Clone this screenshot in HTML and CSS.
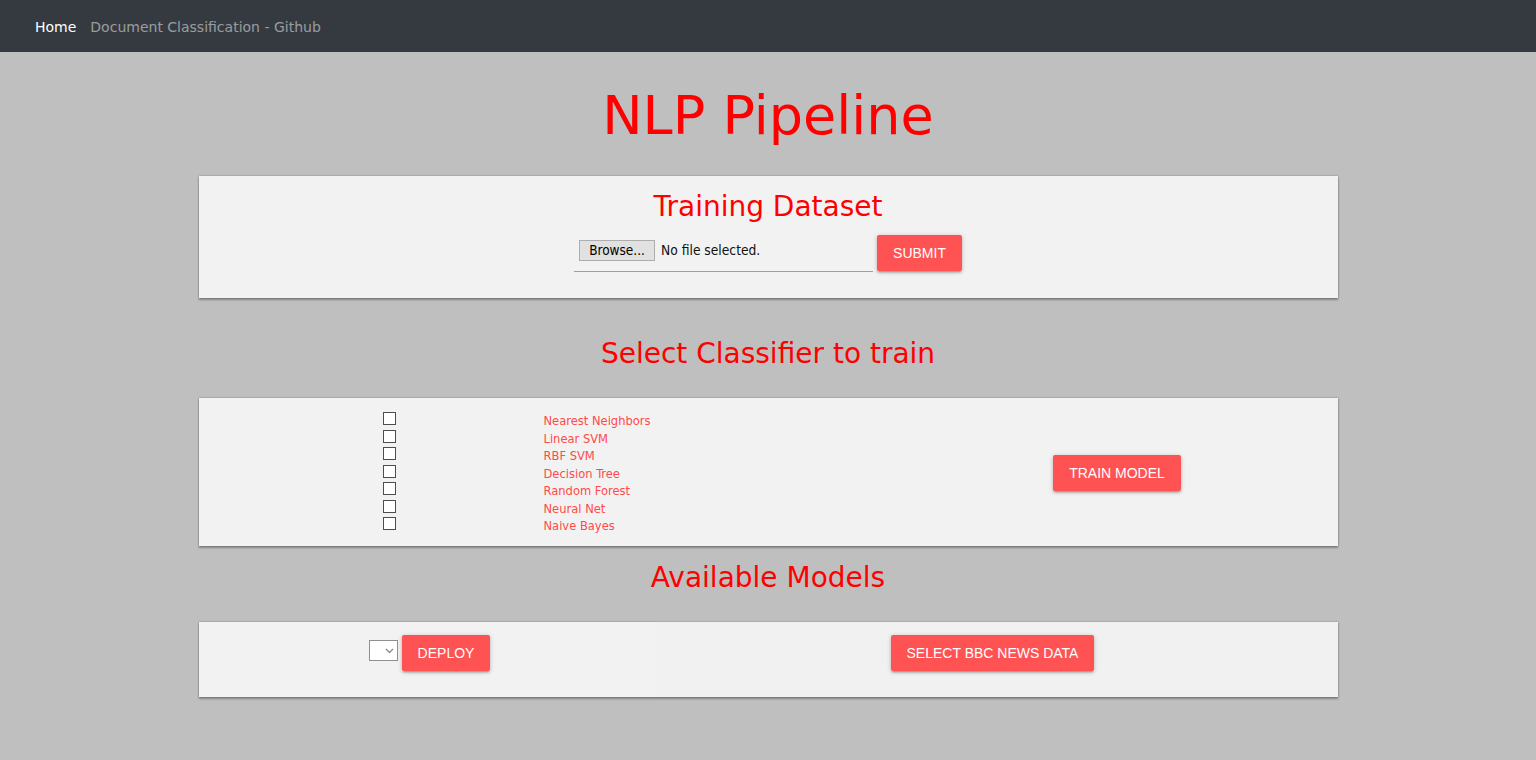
FILE: index.html
```html
<!DOCTYPE html>
<html lang="en">
<head>
<meta charset="utf-8">
<title>NLP Pipeline</title>
<link rel="stylesheet" href="styles.css">
</head>
<body>
<nav class="navbar">
  <a class="nav-link active" href="#">Home</a>
  <a class="nav-link" href="#">Document Classification - Github</a>
</nav>
<main class="main">
  <h1 class="title">NLP Pipeline</h1>

  <section class="card card-upload">
    <h2 class="heading">Training Dataset</h2>
    <div class="file-row">
      <div class="file-field">
        <span class="browse">Browse...</span>
        <span class="file-name">No file selected.</span>
      </div>
      <button class="btn">SUBMIT</button>
    </div>
  </section>

  <h2 class="heading section-heading">Select Classifier to train</h2>

  <section class="card card-classifiers">
    <div class="checks">
      <span class="check"></span>
      <span class="check"></span>
      <span class="check"></span>
      <span class="check"></span>
      <span class="check"></span>
      <span class="check"></span>
      <span class="check"></span>
    </div>
    <ul class="labels">
      <li>Nearest Neighbors</li>
      <li>Linear SVM</li>
      <li>RBF SVM</li>
      <li>Decision Tree</li>
      <li>Random Forest</li>
      <li>Neural Net</li>
      <li>Naive Bayes</li>
    </ul>
    <div class="train-col">
      <button class="btn">TRAIN MODEL</button>
    </div>
  </section>

  <h2 class="heading section-heading models-heading">Available Models</h2>

  <section class="card card-models">
    <div class="deploy-col">
      <span class="select"><svg width="9" height="6" viewBox="0 0 9 6"><path d="M1 1l3.5 3.5L8 1" fill="none" stroke="#8a8a8a" stroke-width="1.3"/></svg></span>
      <button class="btn">DEPLOY</button>
    </div>
    <div class="data-col">
      <button class="btn">SELECT BBC NEWS DATA</button>
    </div>
  </section>
</main>
</body>
</html>
```
FILE: styles.css
```css
* { box-sizing: border-box; }

body {
  margin: 0;
  background: #bfbfbf;
  font-family: "DejaVu Sans Condensed", "Noto Sans", "DejaVu Sans", sans-serif;
}

.navbar {
  height: 52px;
  background: #343a40;
  display: flex;
  align-items: center;
  padding: 2px 0 0 35px;
  gap: 14px;
}

.nav-link {
  font-family: "DejaVu Sans", sans-serif;
  font-size: 14px;
  color: rgba(255, 255, 255, 0.5);
  text-decoration: none;
}

.nav-link.active { color: #fff; }

.main { padding-bottom: 60px; }

.title {
  margin: 32px 0 28px;
  text-align: center;
  font-family: "DejaVu Sans", sans-serif;
  font-size: 54px;
  line-height: 64px;
  font-weight: normal;
  color: #ff0000;
}

.heading {
  margin: 0;
  text-align: center;
  font-family: "DejaVu Sans", sans-serif;
  font-size: 28px;
  line-height: 36px;
  font-weight: normal;
  color: #ff0000;
}

.section-heading { margin: 38px 0 26px; }
.models-heading { margin: 14px 0 26px; }

.card {
  width: 1139px;
  margin: 0 auto;
  background: #f2f2f2;
  box-shadow: 0 2px 2px rgba(0, 0, 0, 0.3), 0 0 2px rgba(0, 0, 0, 0.3);
}

.card-upload {
  height: 122px;
  padding-top: 13px;
}

.file-row {
  display: flex;
  justify-content: center;
  gap: 4px;
  margin-top: 10px;
}

.file-field {
  width: 299px;
  height: 37px;
  border-bottom: 1px solid #9e9e9e;
  display: flex;
  align-items: flex-start;
  padding: 5px 0 0 5px;
  gap: 6px;
}

.browse {
  width: 76px;
  height: 21px;
  background: #e1e1e1;
  border: 1px solid #adadad;
  font-size: 13.5px;
  line-height: 19px;
  text-align: center;
  color: #000;
}

.file-name {
  font-size: 13.7px;
  line-height: 21px;
  color: #111;
}

.btn {
  height: 36px;
  padding: 0 16px;
  border: none;
  border-radius: 2px;
  background: #ff5252;
  color: #fff;
  font-family: "Liberation Sans", Arial, sans-serif;
  font-size: 14px;
  line-height: 36px;
  box-shadow: 0 2px 2px 0 rgba(0, 0, 0, 0.14), 0 3px 1px -2px rgba(0, 0, 0, 0.12), 0 1px 5px 0 rgba(0, 0, 0, 0.2);
  cursor: pointer;
}

.card-classifiers {
  height: 148px;
  display: grid;
  grid-template-columns: 345px 353px 1fr;
  padding: 13px 0 12px;
}

.checks {
  display: flex;
  flex-direction: column;
  padding-left: 184px;
}

.check {
  width: 13px;
  height: 13px;
  margin: 1px 0 3.5px;
  background: #fff;
  border: 1px solid #4d4d4d;
}

.labels {
  list-style: none;
  margin: 0;
  padding: 1px 0 0;
  font-size: 12.8px;
  line-height: 17.5px;
  color: #ff4a4a;
}

.train-col {
  display: flex;
  align-items: center;
  justify-content: center;
}

.card-models {
  height: 75px;
  display: grid;
  grid-template-columns: 456px 1fr;
}

.deploy-col {
  display: flex;
  justify-content: center;
  align-items: flex-start;
  gap: 4px;
  padding-top: 13px;
  padding-left: 6px;
}

.select {
  width: 29px;
  height: 21px;
  margin-top: 5px;
  background: #fff;
  border: 1px solid #8f8f8f;
  display: flex;
  align-items: center;
  justify-content: flex-end;
  padding-right: 3px;
}

.data-col {
  display: flex;
  justify-content: center;
  align-items: flex-start;
  padding-top: 13px;
  padding-right: 7px;
  background: #f1f1f1;
}
```
